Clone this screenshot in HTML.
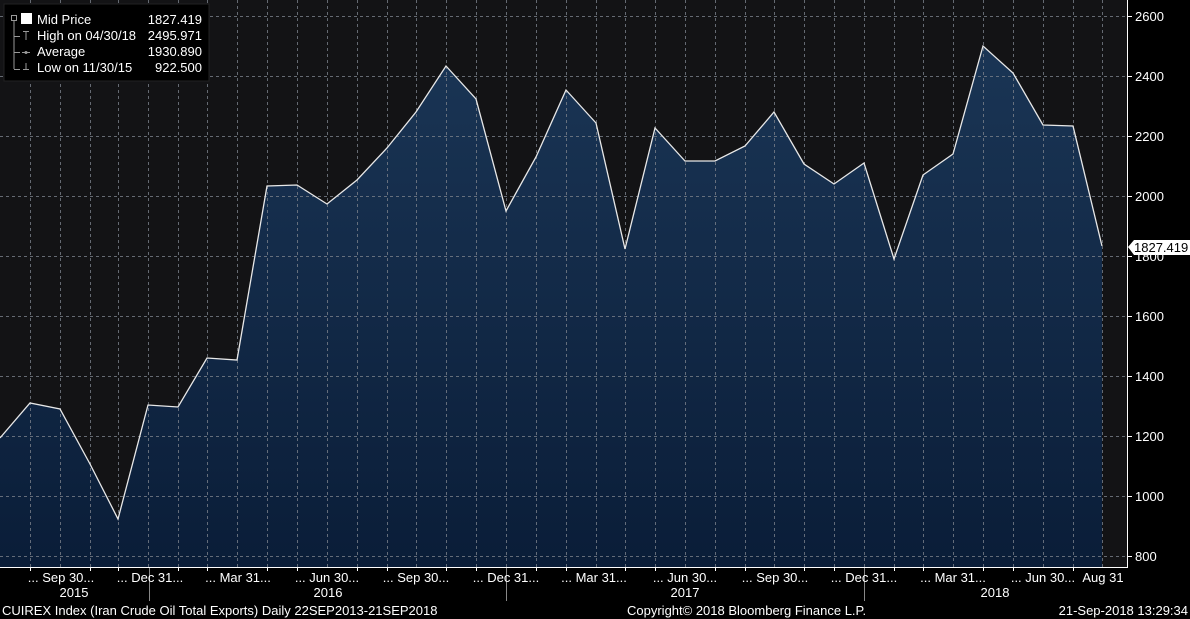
<!DOCTYPE html>
<html><head><meta charset="utf-8"><style>
html,body{margin:0;padding:0;background:#000;}
svg{display:block;font-family:"Liberation Sans",sans-serif;}
</style></head><body>
<svg width="1190" height="619" viewBox="0 0 1190 619" xmlns="http://www.w3.org/2000/svg">
<defs>
<linearGradient id="g" x1="0" y1="0" x2="0" y2="1">
<stop offset="0" stop-color="#1a3555"/><stop offset="1" stop-color="#0a1d38"/>
</linearGradient>
</defs>
<rect x="0" y="0" width="1190" height="619" fill="#000"/>
<rect x="0" y="0" width="1127" height="567" fill="#131315"/>
<polygon fill="url(#g)" points="0,438 30,403 60,409 90,464 118,519 148,405 178,407 207,358 237,360 267,186 297,185 327,204 357,180 387,148 416,112 446,66 476,99 506,211 536,157 566,90 596,123 625,249 655,128 685,161 715,161 745,146 774,112 804,164 834,184 864,163 894,259 923,175 953,154 983,46 1013,73 1043,125 1073,126 1102,246 1102,567 0,567"/>
<g stroke="#7a808a" stroke-width="1" stroke-dasharray="3,3" opacity="0.8">
<line x1="0" y1="16.5" x2="1127" y2="16.5"/><line x1="0" y1="76.5" x2="1127" y2="76.5"/><line x1="0" y1="136.5" x2="1127" y2="136.5"/><line x1="0" y1="196.5" x2="1127" y2="196.5"/><line x1="0" y1="256.5" x2="1127" y2="256.5"/><line x1="0" y1="316.5" x2="1127" y2="316.5"/><line x1="0" y1="376.5" x2="1127" y2="376.5"/><line x1="0" y1="436.5" x2="1127" y2="436.5"/><line x1="0" y1="496.5" x2="1127" y2="496.5"/><line x1="0" y1="556.5" x2="1127" y2="556.5"/>
<line x1="30.5" y1="0" x2="30.5" y2="567"/><line x1="60.5" y1="0" x2="60.5" y2="567"/><line x1="90.5" y1="0" x2="90.5" y2="567"/><line x1="118.5" y1="0" x2="118.5" y2="567"/><line x1="148.5" y1="0" x2="148.5" y2="567"/><line x1="178.5" y1="0" x2="178.5" y2="567"/><line x1="207.5" y1="0" x2="207.5" y2="567"/><line x1="237.5" y1="0" x2="237.5" y2="567"/><line x1="267.5" y1="0" x2="267.5" y2="567"/><line x1="297.5" y1="0" x2="297.5" y2="567"/><line x1="327.5" y1="0" x2="327.5" y2="567"/><line x1="357.5" y1="0" x2="357.5" y2="567"/><line x1="387.5" y1="0" x2="387.5" y2="567"/><line x1="416.5" y1="0" x2="416.5" y2="567"/><line x1="446.5" y1="0" x2="446.5" y2="567"/><line x1="476.5" y1="0" x2="476.5" y2="567"/><line x1="506.5" y1="0" x2="506.5" y2="567"/><line x1="536.5" y1="0" x2="536.5" y2="567"/><line x1="566.5" y1="0" x2="566.5" y2="567"/><line x1="596.5" y1="0" x2="596.5" y2="567"/><line x1="625.5" y1="0" x2="625.5" y2="567"/><line x1="655.5" y1="0" x2="655.5" y2="567"/><line x1="685.5" y1="0" x2="685.5" y2="567"/><line x1="715.5" y1="0" x2="715.5" y2="567"/><line x1="745.5" y1="0" x2="745.5" y2="567"/><line x1="774.5" y1="0" x2="774.5" y2="567"/><line x1="804.5" y1="0" x2="804.5" y2="567"/><line x1="834.5" y1="0" x2="834.5" y2="567"/><line x1="864.5" y1="0" x2="864.5" y2="567"/><line x1="894.5" y1="0" x2="894.5" y2="567"/><line x1="923.5" y1="0" x2="923.5" y2="567"/><line x1="953.5" y1="0" x2="953.5" y2="567"/><line x1="983.5" y1="0" x2="983.5" y2="567"/><line x1="1013.5" y1="0" x2="1013.5" y2="567"/><line x1="1043.5" y1="0" x2="1043.5" y2="567"/><line x1="1073.5" y1="0" x2="1073.5" y2="567"/><line x1="1102.5" y1="0" x2="1102.5" y2="567"/>
</g>
<polyline fill="none" stroke="#e8e8e8" stroke-width="1.3" points="0,438 30,403 60,409 90,464 118,519 148,405 178,407 207,358 237,360 267,186 297,185 327,204 357,180 387,148 416,112 446,66 476,99 506,211 536,157 566,90 596,123 625,249 655,128 685,161 715,161 745,146 774,112 804,164 834,184 864,163 894,259 923,175 953,154 983,46 1013,73 1043,125 1073,126 1102,246"/>
<!-- axes -->
<line x1="1127.5" y1="0" x2="1127.5" y2="567" stroke="#fff"/>
<line x1="0" y1="567.5" x2="1128" y2="567.5" stroke="#fff"/>
<g stroke="#fff"><line x1="30.5" y1="568" x2="30.5" y2="571"/><line x1="90.5" y1="568" x2="90.5" y2="571"/><line x1="118.5" y1="568" x2="118.5" y2="571"/><line x1="178.5" y1="568" x2="178.5" y2="571"/><line x1="207.5" y1="568" x2="207.5" y2="571"/><line x1="267.5" y1="568" x2="267.5" y2="571"/><line x1="297.5" y1="568" x2="297.5" y2="571"/><line x1="357.5" y1="568" x2="357.5" y2="571"/><line x1="387.5" y1="568" x2="387.5" y2="571"/><line x1="446.5" y1="568" x2="446.5" y2="571"/><line x1="476.5" y1="568" x2="476.5" y2="571"/><line x1="536.5" y1="568" x2="536.5" y2="571"/><line x1="566.5" y1="568" x2="566.5" y2="571"/><line x1="625.5" y1="568" x2="625.5" y2="571"/><line x1="655.5" y1="568" x2="655.5" y2="571"/><line x1="715.5" y1="568" x2="715.5" y2="571"/><line x1="745.5" y1="568" x2="745.5" y2="571"/><line x1="804.5" y1="568" x2="804.5" y2="571"/><line x1="834.5" y1="568" x2="834.5" y2="571"/><line x1="894.5" y1="568" x2="894.5" y2="571"/><line x1="923.5" y1="568" x2="923.5" y2="571"/><line x1="983.5" y1="568" x2="983.5" y2="571"/><line x1="1013.5" y1="568" x2="1013.5" y2="571"/><line x1="1073.5" y1="568" x2="1073.5" y2="571"/></g>
<g stroke="#888"><line x1="149.5" y1="568" x2="149.5" y2="601"/><line x1="506.5" y1="568" x2="506.5" y2="601"/><line x1="864.5" y1="568" x2="864.5" y2="601"/></g>
<!-- y axis labels -->
<g fill="#fff" font-size="13">
<g stroke="#fff"><line x1="1128" y1="16.5" x2="1132" y2="16.5"/><line x1="1128" y1="76.5" x2="1132" y2="76.5"/><line x1="1128" y1="136.5" x2="1132" y2="136.5"/><line x1="1128" y1="196.5" x2="1132" y2="196.5"/><line x1="1128" y1="256.5" x2="1132" y2="256.5"/><line x1="1128" y1="316.5" x2="1132" y2="316.5"/><line x1="1128" y1="376.5" x2="1132" y2="376.5"/><line x1="1128" y1="436.5" x2="1132" y2="436.5"/><line x1="1128" y1="496.5" x2="1132" y2="496.5"/><line x1="1128" y1="556.5" x2="1132" y2="556.5"/></g>
<text x="1135" y="21">2600</text><text x="1135" y="81">2400</text><text x="1135" y="141">2200</text><text x="1135" y="201">2000</text><text x="1135" y="261">1800</text><text x="1135" y="321">1600</text><text x="1135" y="381">1400</text><text x="1135" y="441">1200</text><text x="1135" y="501">1000</text><text x="1135" y="561">800</text>
</g>
<polygon points="1128,247 1134,240 1190,240 1190,255 1134,255" fill="#fff"/>
<text x="1134" y="252" font-size="13" fill="#000">1827.419</text>
<!-- x labels -->
<g fill="#fff" font-size="13" text-anchor="middle">
<text x="61" y="582">... Sep 30...</text><text x="150" y="582">... Dec 31...</text><text x="238" y="582">... Mar 31...</text><text x="327" y="582">... Jun 30...</text><text x="416" y="582">... Sep 30...</text><text x="506" y="582">... Dec 31...</text><text x="594" y="582">... Mar 31...</text><text x="685" y="582">... Jun 30...</text><text x="775" y="582">... Sep 30...</text><text x="864" y="582">... Dec 31...</text><text x="953" y="582">... Mar 31...</text><text x="1043" y="582">... Jun 30...</text><text x="1103" y="582">Aug 31</text>
<text x="74" y="597">2015</text><text x="328" y="597">2016</text><text x="685" y="597">2017</text><text x="995" y="597">2018</text>
</g>
<g fill="#fff" font-size="13">
<text x="2" y="615">CUIREX Index (Iran Crude Oil Total Exports)  Daily 22SEP2013-21SEP2018</text>
<text x="627" y="615">Copyright© 2018 Bloomberg Finance L.P.</text>
<text x="1188" y="615" text-anchor="end">21-Sep-2018 13:29:34</text>
</g>
<!-- legend -->
<rect x="4" y="4" width="205" height="77" fill="#000" stroke="#222"/>
<g stroke="#999" fill="none"><rect x="11.5" y="15.5" width="5" height="5"/><line x1="14" y1="21" x2="14" y2="69"/><line x1="14" y1="36.5" x2="20" y2="36.5"/><line x1="14" y1="52.5" x2="20" y2="52.5"/><line x1="14" y1="69.5" x2="20" y2="69.5"/><line x1="23" y1="31.5" x2="29" y2="31.5"/><line x1="26" y1="31" x2="26" y2="40"/><line x1="22" y1="52.5" x2="30" y2="52.5"/><line x1="26" y1="63" x2="26" y2="69"/><line x1="23" y1="69.5" x2="29" y2="69.5"/></g>
<circle cx="26" cy="52.5" r="1.5" fill="#999"/>
<rect x="21" y="13" width="11" height="11" fill="#fff"/>
<g fill="#fff" font-size="13">
<text x="37" y="24">Mid Price</text><text x="202" y="24" text-anchor="end">1827.419</text>
<text x="37" y="40">High on 04/30/18</text><text x="202" y="40" text-anchor="end">2495.971</text>
<text x="37" y="56">Average</text><text x="202" y="56" text-anchor="end">1930.890</text>
<text x="37" y="72">Low on 11/30/15</text><text x="202" y="72" text-anchor="end">922.500</text>
</g>
</svg>
</body></html>
